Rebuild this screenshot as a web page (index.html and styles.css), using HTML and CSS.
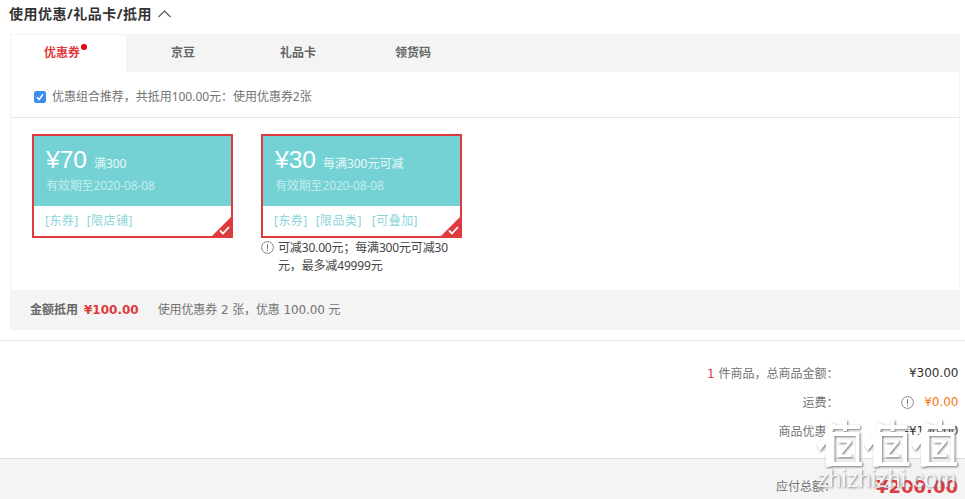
FILE: index.html
```html
<!DOCTYPE html>
<html lang="zh-CN">
<head>
<meta charset="utf-8">
<title>使用优惠/礼品卡/抵用</title>
<link rel="stylesheet" href="styles.css">
</head>
<body>
<main class="page">
  <h2 class="title"><span>使用优惠/礼品卡/抵用</span>
    <svg class="caret" width="13" height="8" viewBox="0 0 13 8"><path d="M.5 7 6.5 1l6 6" fill="none" stroke="#555" stroke-width="1.1"/></svg>
  </h2>
  <section class="panel">
    <nav class="tabs">
      <div class="tab active">优惠券<i class="dot"></i></div>
      <div class="tab">京豆</div>
      <div class="tab">礼品卡</div>
      <div class="tab">领货码</div>
    </nav>
    <div class="recommend">
      <svg class="check" width="12" height="12" viewBox="0 0 12 12"><rect width="12" height="12" rx="2.5" fill="#3b8df0"/><path d="m3 6.3 2.1 2.3L9 3.2" fill="none" stroke="#fff" stroke-width="1.6"/></svg>
      <span>优惠组合推荐，共抵用100.00元：使用优惠券2张</span>
    </div>
    <div class="coupons">
      <div class="item">
        <article class="coupon">
          <div class="top">
            <div class="value"><b>¥70</b><span>满300</span></div>
            <div class="date">有效期至2020-08-08</div>
          </div>
          <div class="tags"><span>[东券]</span><span>[限店铺]</span></div>
          <svg class="corner" width="21" height="21" viewBox="0 0 21 21"><path d="M21 0v21H0z" fill="#df3a3e"/><path d="m9 14.5 3 3 6-6.500" fill="none" stroke="#fff" stroke-width="1.8"/></svg>
        </article>
      </div>
      <div class="item">
        <article class="coupon">
          <div class="top">
            <div class="value"><b>¥30</b><span>每满300元可减</span></div>
            <div class="date">有效期至2020-08-08</div>
          </div>
          <div class="tags"><span>[东券]</span><span>[限品类]</span><span class="wide">[可叠加]</span></div>
          <svg class="corner" width="21" height="21" viewBox="0 0 21 21"><path d="M21 0v21H0z" fill="#df3a3e"/><path d="m9 14.5 3 3 6-6.500" fill="none" stroke="#fff" stroke-width="1.8"/></svg>
        </article>
        <div class="note">
          <svg class="info" width="13" height="13" viewBox="0 0 13 13"><circle cx="6.5" cy="6.5" r="5.9" fill="none" stroke="#888"/><path d="M6.5 3v5M6.5 9v1.2" stroke="#777"/></svg>
          <p>可减30.00元；每满300元可减30<br>元，最多减49999元</p>
        </div>
      </div>
    </div>
    <div class="deduct"><strong>金额抵用</strong><b>¥100.00</b><span>使用优惠券 2 张，优惠 100.00 元</span></div>
  </section>
  <section class="summary">
    <div class="row"><span class="label"><em>1</em> 件商品，总商品金额：</span><span class="price">¥300.00</span></div>
    <div class="row"><span class="label">运费：</span><span class="price orange"><svg class="info" width="13" height="13" viewBox="0 0 13 13"><circle cx="6.5" cy="6.5" r="5.9" fill="none" stroke="#888"/><path d="M6.5 3v5M6.5 9v1.2" stroke="#777"/></svg>¥0.00</span></div>
    <div class="row"><span class="label">商品优惠：</span><span class="price">-¥100.00</span></div>
  </section>
  <footer class="total"><span class="label">应付总额：</span><span class="price">¥200.00</span></footer>
  <svg class="watermark" width="153" height="85" viewBox="0 0 153 85">
    <defs>
      <g id="mark">
        <text class="person" transform="translate(4 47.500) scale(.8 1)">亻</text>
        <path d="M18 13h30M33 6v11M20.500 50V20H45.500V50M16 50h34" fill="none" stroke="#fff" stroke-width="4"/>
        <text class="zed" transform="translate(24.500 43) scale(1.1 1)">Z</text>
      </g>
    </defs>
    <use href="#mark"/><use href="#mark" x="47.500"/><use href="#mark" x="95"/>
    <text class="site" x="5" y="73" textLength="139">zhizhizhi.com</text>
  </svg>
</main>
</body>
</html>
```
FILE: styles.css
```css
* { box-sizing: border-box; }
body {
  margin: 0;
  background: #fff;
  color: #737373;
  font: 12px/18px "Noto Sans", "Noto Sans CJK SC", sans-serif;
}
h2, p { margin: 0; }
svg { display: block; flex: none; }
.page { position: relative; width: 965px; height: 499px; overflow: hidden; }
.title {
  display: flex;
  align-items: center;
  gap: 7px;
  height: 34px;
  padding: 0 0 6px 9px;
  color: #333;
  font-size: 14px;
  line-height: 20px;
}
.title span { width: 142px; white-space: nowrap; letter-spacing: .5px; }
.panel { height: 296px; margin: 0 5px 0 10px; border: solid #f4f4f4; border-width: 0 1px; }
.tabs { display: flex; height: 38px; background: #f4f4f4; }
.tab { position: relative; width: 115px; padding-right: 1px; text-align: center; font-weight: bold; line-height: 38px; color: #666; }
.tab.active { height: 38px; margin-top: 1px; background: #fff; color: #df3a3e; padding-right: 13px; line-height: 36px; }
.dot { position: absolute; left: 70px; top: 9px; width: 6px; height: 6px; border-radius: 50%; background: #e60012; }
.recommend { display: flex; align-items: center; gap: 6px; height: 46px; padding: 4px 0 0 23px; border-bottom: 1px solid #e4e4e4; letter-spacing: -.03px; }
.recommend span { padding-top: 1px; }
.coupons { display: flex; gap: 28px; height: 172px; padding: 16px 21px; }
.item { width: 201px; }
.coupon { position: relative; height: 104px; border: 2px solid #df3a3e; }
.top { height: 70px; padding: 9px 0 0 12px; background: #74d2d4; color: #fff; }
.value { display: flex; align-items: baseline; gap: 7px; height: 31px; line-height: 30px; color: #e8f8f8; }
.value b { color: #fff; font: 24.5px/30px "Liberation Sans", sans-serif; }
.date { margin-top: 1px; color: #c4ecee; letter-spacing: -.14px; }
.tags { display: flex; gap: 8px; padding: 6px 0 0 11px; color: #8ad5d8; letter-spacing: .45px; }
.wide { margin-left: 2px; }
.corner { position: absolute; right: -1px; bottom: -1px; }
.note { display: flex; gap: 4px; padding-top: 1px; color: #444; white-space: nowrap; letter-spacing: -.16px; }
.note .info { margin-top: 2px; }
.deduct { display: flex; align-items: center; height: 40px; margin: 0 -1px; padding-left: 20px; background: #f4f4f4; font-family: "DejaVu Sans", "Noto Sans CJK SC", sans-serif; }
.deduct strong { color: #666; }
.deduct b { margin: 0 19px 0 6px; color: #df3a3e; }
.deduct span { letter-spacing: -.1px; }
.summary { height: 128px; margin-top: 10px; padding-top: 19px; border-top: 1px solid #e9e9e9; font-family: "DejaVu Sans", "Noto Sans CJK SC", sans-serif; }
.row { display: flex; justify-content: flex-end; height: 29px; padding-right: 6.500px; line-height: 28px; }
.price { display: flex; justify-content: flex-end; align-items: center; width: 120px; height: 26px; color: #333; }
.label em { color: #df3a3e; font-style: normal; }
.orange { gap: 10px; color: #f27a10; }
.total { display: flex; justify-content: flex-end; height: 50px; margin-top: -10px; padding: 13px 7px 0 0; border-top: 1px solid #ddd; background: #f4f4f4; line-height: 29px; }
.total .label { margin-right: 2px; }
.total .price { height: 29px; color: #df3a3e; font: bold 18px/29px "DejaVu Sans", sans-serif; }
.watermark { position: absolute; left: 812px; top: 414px; fill: #fff; filter: drop-shadow(1px 1px 1px #777); }
.person { font: 900 47px "Noto Sans CJK SC", sans-serif; }
.zed { font: bold 24px "Liberation Sans", sans-serif; }
.site { font: 23px "Liberation Sans", sans-serif; opacity: .85; }
```
